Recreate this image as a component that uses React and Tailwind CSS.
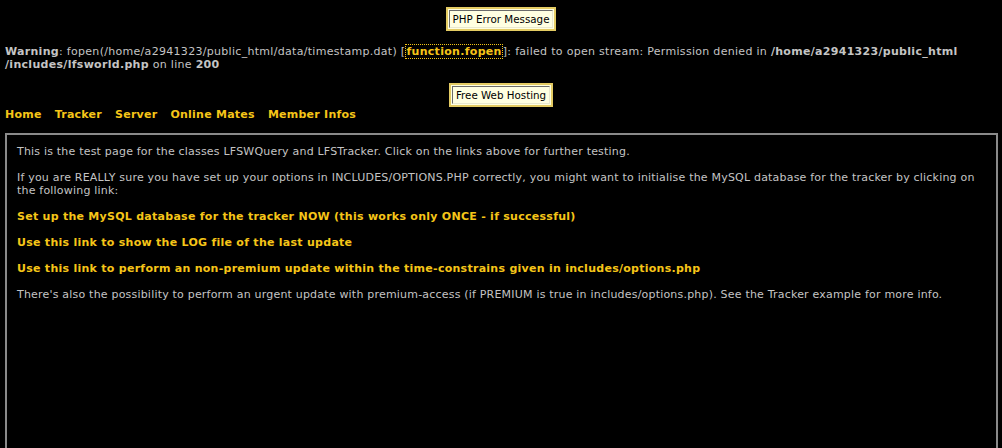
import React from 'react';

const gold = 'text-[#f5c518]';

function Tip({ children }) {
  return (
    <div className="flex justify-center">
      <div className="border-2 border-[#e3cb63] bg-[#ffffe1] p-px">
        <div className="border border-t-[#6b6b6b] border-l-[#6b6b6b] border-r-[#e8e8d0] border-b-[#e8e8d0] px-[3px] h-[18px] leading-[16px] text-[10.3px] text-black">
          {children}
        </div>
      </div>
    </div>
  );
}

const navItems = ['Home', 'Tracker', 'Server', 'Online Mates', 'Member Infos'];

const actions = [
  'Set up the MySQL database for the tracker NOW (this works only ONCE - if successful)',
  'Use this link to show the LOG file of the last update',
  'Use this link to perform an non-premium update within the time-constrains given in includes/options.php',
];

export default function App() {
  return (
    <div
      className="min-h-[448px] bg-black text-[#c4c4c4] text-[11px] leading-[13px] overflow-hidden"
      style={{ fontFamily: '"DejaVu Sans", Verdana, sans-serif' }}
    >
      <div className="pt-[7px]">
        <Tip>PHP Error Message</Tip>
      </div>

      {/* php warning */}
      <p className="mt-[14px] px-[5px] tracking-[0.3px]">
        <b>Warning</b>: fopen(/home/a2941323/public_html/data/timestamp.dat) [
        <a className={`${gold} font-bold border border-dotted border-[#f5c518]`}>function.fopen</a>
        ]: failed to open stream: Permission denied in <b>/home/a2941323/public_html</b>
        <br />
        <b>/includes/lfsworld.php</b> on line <b>200</b>
      </p>

      <div className="mt-[12px]">
        <Tip>Free Web Hosting</Tip>
      </div>

      <nav className="mt-px px-[5px] flex gap-[13px] font-bold tracking-[0.25px]">
        {navItems.map((item) => (
          <a key={item} className={gold}>
            {item}
          </a>
        ))}
      </nav>

      <div className="mt-[12px] ml-[5px] mr-[4px] border-2 border-[#8a8a8a] min-h-[330px] p-[10px] tracking-[0.2px]">
        <p className="mb-[13px]">
          This is the test page for the classes LFSWQuery and LFSTracker. Click on the links above for further testing.
        </p>
        <p className="mb-[13px]">
          If you are REALLY sure you have set up your options in INCLUDES/OPTIONS.PHP correctly, you might want to initialise the MySQL database for the tracker by clicking on
          <br />
          the following link:
        </p>
        {actions.map((a) => (
          <p key={a} className={`mb-[13px] font-bold tracking-[0.27px] ${gold}`}>
            {a}
          </p>
        ))}
        <p>
          There's also the possibility to perform an urgent update with premium-access (if PREMIUM is true in includes/options.php). See the Tracker example for more info.
        </p>
      </div>
    </div>
  );
}
